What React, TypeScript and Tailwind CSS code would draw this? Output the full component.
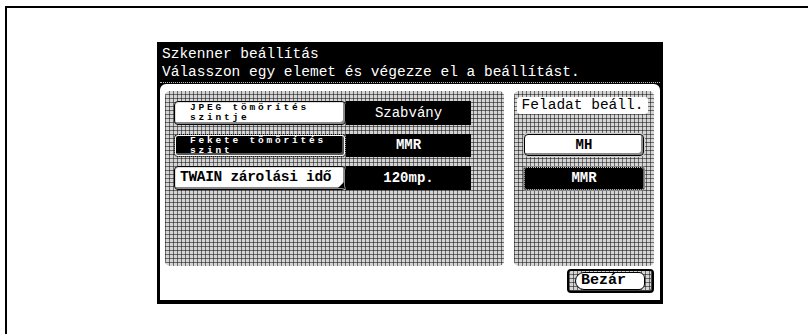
import React from "react";

const grid =
  "bg-[#d4d4d4] bg-[image:linear-gradient(90deg,rgba(0,0,0,0.5)_1px,transparent_1px),linear-gradient(0deg,rgba(0,0,0,0.5)_1px,transparent_1px)] [background-size:4px_4px]";

const mono = "font-['Liberation_Mono','DejaVu_Sans_Mono',monospace]";

function SmallLabel({ l1, l2, dark }: { l1: string; l2: string; dark?: boolean }) {
  return (
    <div
      className={`flex flex-col items-start justify-center pl-[15px] ${mono} font-bold text-[9.5px] leading-[10px] tracking-[2.8px] ${
        dark ? "text-white" : "text-black"
      }`}
    >
      <span className="block h-[10px]">{l1}</span>
      <span className="block h-[10px]">{l2}</span>
    </div>
  );
}

export default function App() {
  return (
    <div className="w-[808px] h-[334px] overflow-hidden bg-white">
      <div className="ml-[5px] mt-[6px] w-[820px] h-[340px] border-l-2 border-t-2 border-black">
        <div className="ml-[150px] mt-[34px] w-[506px] h-[262px] bg-black flex flex-col px-[3px] pb-[4px]">
          {/* header */}
          <div className={`h-[41px] pt-[3px] px-[2px] text-white ${mono} text-[14.5px] leading-[18px] border-b border-dotted border-[#bbb]`}>
            <div>Szkenner beállítás</div>
            <div>Válasszon egy elemet és végezze el a beállítást.</div>
          </div>
          {/* body */}
          <div className="flex-1 bg-white rounded-t-[6px] flex flex-col px-[5px] pt-[7px] pb-[7px] mt-[1px]">
            <div className="flex gap-[10px] h-[175px]">
              {/* left grid */}
              <div className={`w-[339px] h-full rounded-[5px] ${grid} pt-[10px] pl-[9px] flex flex-col gap-[9px]`}>
                {/* row 1 */}
                <div className="flex h-[24px]">
                  <div className="w-[172px] h-full bg-white border border-black rounded-[4px] shadow-[inset_-2px_-2px_0_#8a8a8a,inset_1px_1px_0_#ddd] flex">
                    <SmallLabel l1="JPEG tömörítés" l2="szintje" />
                  </div>
                  <div className={`w-[125px] h-full bg-black text-white flex items-center justify-center ${mono} text-[14px]`}>
                    Szabvány
                  </div>
                </div>
                {/* row 2 */}
                <div className="flex h-[23px]">
                  <div className="w-[172px] h-full bg-black border border-[#888] border-dotted rounded-[4px] shadow-[inset_0_0_0_1px_#fff,inset_-2px_-2px_0_1px_#555] flex">
                    <SmallLabel l1="Fekete tömörítés" l2="szint" dark />
                  </div>
                  <div className={`w-[125px] h-full bg-black text-white flex items-center justify-center ${mono} font-bold text-[14px]`}>
                    MMR
                  </div>
                </div>
                {/* row 3 */}
                <div className="flex h-[24px]">
                  <div className="relative w-[172px] h-full bg-white border border-black rounded-[4px] shadow-[inset_-2px_-2px_0_#8a8a8a,inset_1px_1px_0_#ddd] flex items-center pl-[5px]">
                    <span className={`${mono} font-bold text-[14.5px] tracking-[-0.3px] text-black`}>TWAIN zárolási idő</span>
                    <div className="absolute right-[1px] bottom-[1px] w-0 h-0 border-l-[6px] border-l-transparent border-b-[6px] border-b-black" />
                  </div>
                  <div className={`w-[125px] h-full bg-black text-white flex items-center justify-center ${mono} font-bold text-[14px]`}>
                    120mp.
                  </div>
                </div>
              </div>
              {/* right grid */}
              <div className={`w-[140px] h-full rounded-[5px] ${grid} pt-[6px] pl-[3px] flex flex-col`}>
                <div className={`w-[131px] h-[17px] bg-white rounded-[3px] flex items-center justify-center ${mono} text-[14.5px] text-black`}>
                  Feladat beáll.
                </div>
                <div className="mt-[20px] ml-[7px] w-[120px] h-[22px] bg-white border border-black rounded-[4px] shadow-[inset_-2px_-2px_0_#8a8a8a,0_0_0_1px_#ccc] flex items-center justify-center">
                  <span className={`${mono} font-bold text-[14px] text-black`}>MH</span>
                </div>
                <div className="mt-[11px] ml-[7px] w-[120px] h-[23px] bg-black border border-dotted border-[#ccc] rounded-[3px] shadow-[0_0_0_1px_#888] flex items-center justify-center">
                  <span className={`${mono} font-bold text-[14px] text-white`}>MMR</span>
                </div>
              </div>
            </div>
            <div className="flex justify-end mt-[3px] pr-[1px]">
              <div className={`w-[87px] h-[24px] border-2 border-black rounded-[4px] ${grid} flex items-center pl-[6px] pr-[7px] py-[1px] shadow-[inset_-1px_-1px_0_#444]`}>
                <div className={`flex-1 h-full bg-white border border-black rounded-l-[9px] rounded-r-[6px] flex items-center pl-[5px] ${mono} text-[15px] font-bold text-black`}>
                  Bezár
                </div>
              </div>
            </div>
          </div>
        </div>
      </div>
    </div>
  );
}
